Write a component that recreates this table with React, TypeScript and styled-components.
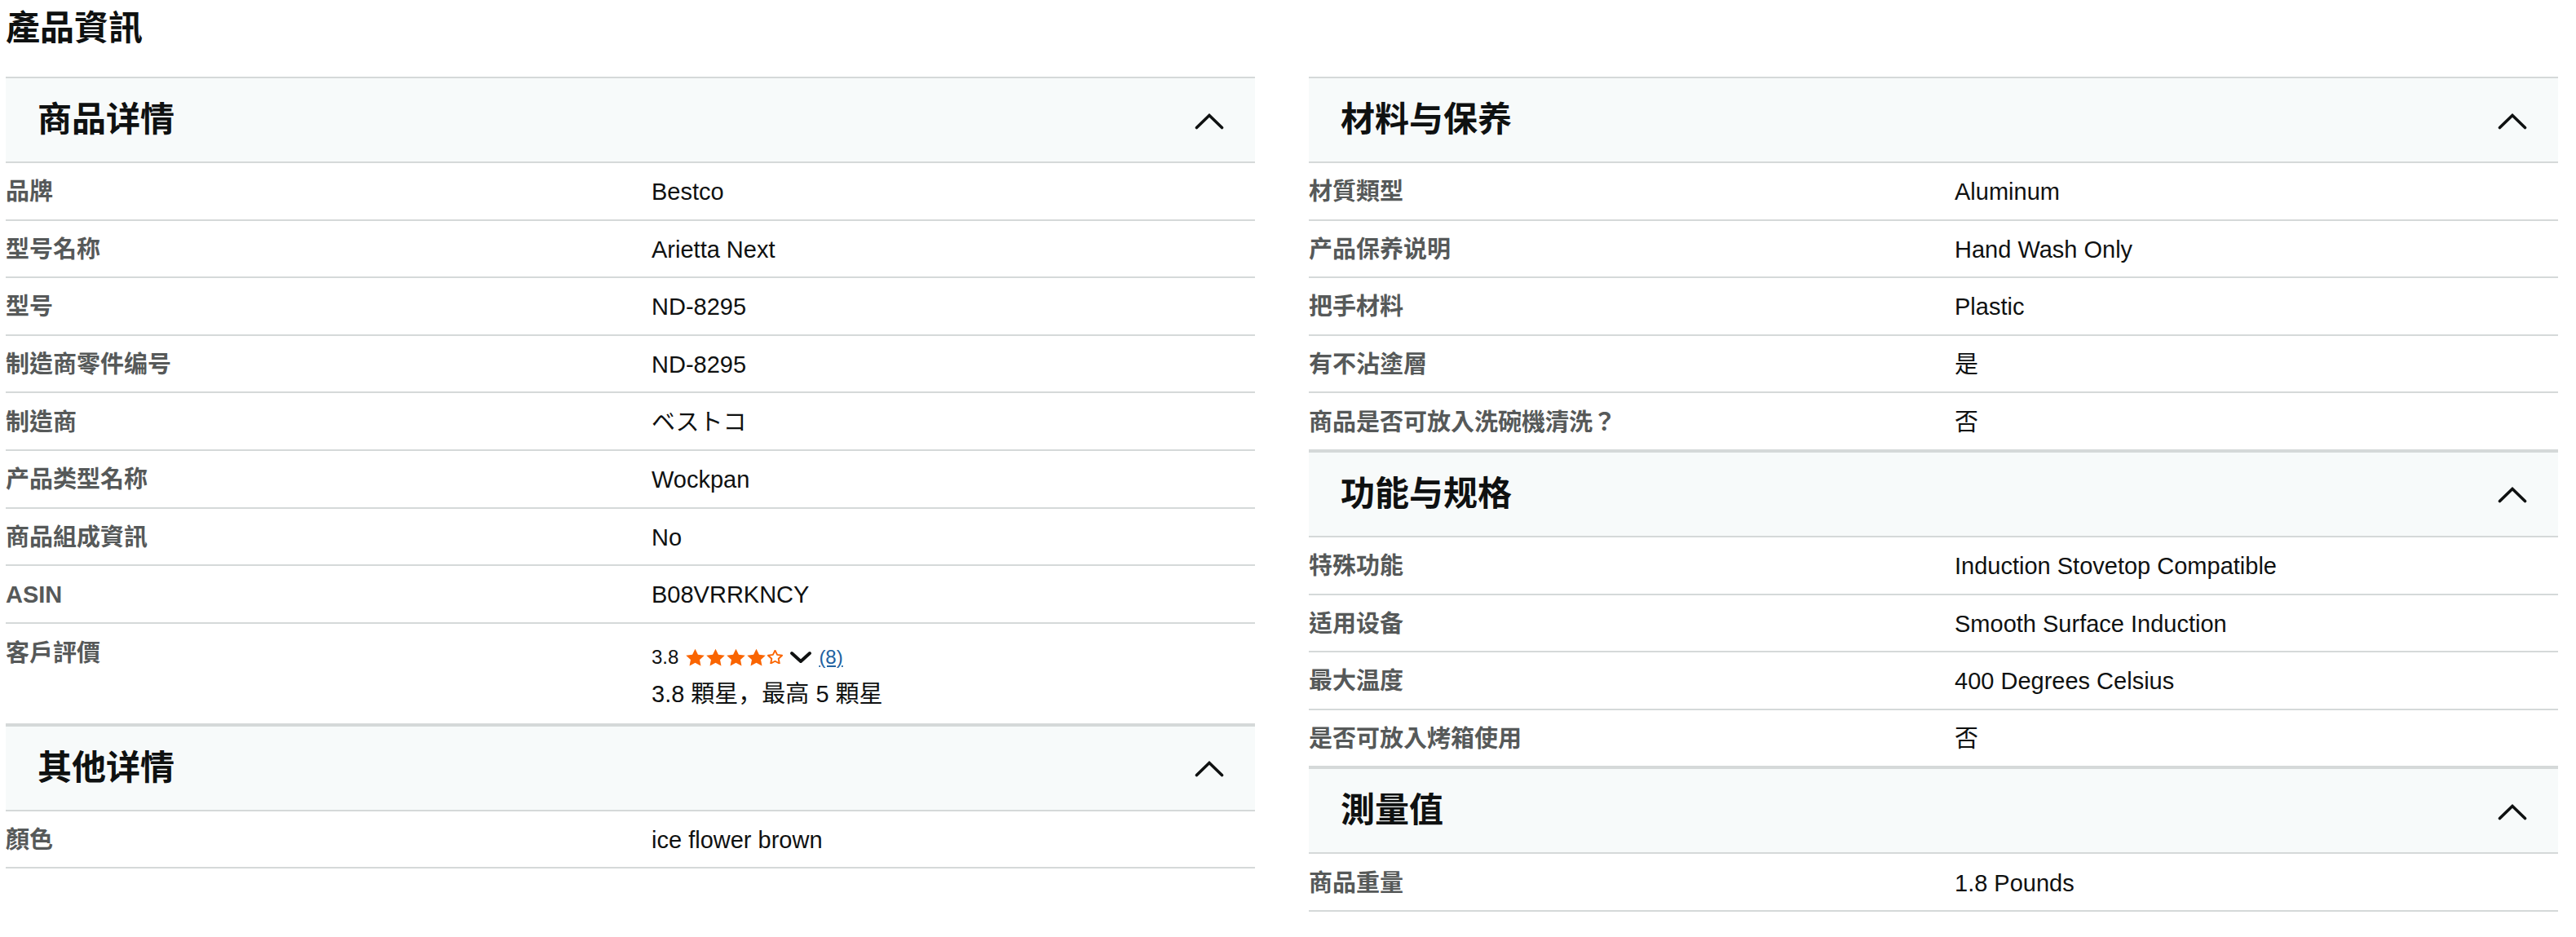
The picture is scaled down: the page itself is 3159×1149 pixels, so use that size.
import React from "react";
import styled, { createGlobalStyle } from "styled-components";

const GlobalStyle = createGlobalStyle`
  html, body { margin: 0; padding: 0; background: #ffffff; }
  body {
    font-family: "Liberation Sans", Arial, "Noto Sans CJK SC", sans-serif;
    color: #0f1111;
  }
  * { box-sizing: border-box; }
`;

const Page = styled.div`
  width: 3159px;
  padding: 0 22px 0 7px;
`;

const Title = styled.h2`
  margin: 0;
  height: 94px;
  padding-top: 6px;
  font-family: "Noto Sans CJK TC", "Noto Sans CJK SC", sans-serif;
  font-size: 42px;
  line-height: 50px;
  font-weight: 700;
  color: #0f1111;
`;

const Columns = styled.div`
  display: grid;
  grid-template-columns: 1fr 1fr;
  column-gap: 66px;
  align-items: start;
`;

const Column = styled.div`
  display: flex;
  flex-direction: column;
`;

const Section = styled.section`
  display: flex;
  flex-direction: column;
`;

const Header = styled.div`
  display: flex;
  align-items: center;
  justify-content: space-between;
  height: 106px;
  padding: 0 38px 0 39px;
  background: #f7fafa;
  border-top: 2px solid #d5d9d9;
  border-bottom: 2px solid #d5d9d9;
`;

const HeaderTitle = styled.h3`
  margin: 0 0 8px 0;
  font-family: "Noto Sans CJK SC", sans-serif;
  font-size: 42px;
  line-height: 50px;
  font-weight: 700;
  color: #0f1111;
`;

const Chevron = styled.svg`
  display: block;
  width: 36px;
  height: 21px;
  margin-top: 2px;
`;

const Row = styled.div<{ $tall?: boolean }>`
  display: grid;
  grid-template-columns: 792px 1fr;
  align-items: ${(p) => (p.$tall ? "start" : "center")};
  height: ${(p) => (p.$tall ? "124px" : "70.6px")};
  padding-top: ${(p) => (p.$tall ? "17px" : "2px")};
  border-bottom: 2px solid #d5d9d9;
`;

const Label = styled.div`
  font-family: "Liberation Sans", Arial, "Noto Sans CJK TC", sans-serif;
  font-size: 29px;
  line-height: 38px;
  font-weight: 700;
  color: #565959;
  white-space: nowrap;
`;

const Value = styled.div`
  font-family: "Liberation Sans", Arial, "Noto Sans CJK SC", sans-serif;
  font-size: 29px;
  line-height: 38px;
  color: #0f1111;
  white-space: nowrap;
`;

const RatingBlock = styled.div`
  display: flex;
  flex-direction: column;
`;

const RatingLine = styled.div`
  display: flex;
  align-items: center;
  height: 44px;
  margin-top: 2px;
  font-size: 24px;
  color: #0f1111;
`;

const RatingSummary = styled.div`
  margin-top: 2px;
  font-size: 29px;
  line-height: 42px;
  color: #0f1111;
  white-space: nowrap;
`;

const Stars = styled.span`
  display: inline-flex;
  align-items: center;
  gap: 0;
  margin-left: 8px;
`;

const StarIcon = styled.svg<{ $small?: boolean }>`
  display: block;
  width: ${(p) => (p.$small ? "19px" : "25px")};
  height: ${(p) => (p.$small ? "17px" : "22px")};
  margin-left: ${(p) => (p.$small ? "1px" : "0")};
`;

const DownIcon = styled.svg`
  display: block;
  width: 28px;
  height: 16px;
  margin-left: 8px;
`;

const CountLink = styled.a`
  margin-left: 8px;
  color: #2162a1;
  text-decoration: underline;
  font-size: 24px;
`;

const STAR_PATH =
  "M12 0.8l3.3 6.9 7.5 1-5.5 5.2 1.4 7.5L12 17.8l-6.7 3.6 1.4-7.5L1.2 8.7l7.5-1z";

const StarFull = () => (
  <StarIcon viewBox="0 0 24 22" preserveAspectRatio="none">
    <path d={STAR_PATH} fill="#fa6400" />
  </StarIcon>
);

const StarEmpty = () => (
  <StarIcon $small viewBox="0 0 24 22" preserveAspectRatio="none">
    <path d={STAR_PATH} fill="none" stroke="#fa6400" strokeWidth="2.4" strokeLinejoin="round" />
  </StarIcon>
);

const UpChevron = () => (
  <Chevron viewBox="0 0 36 21">
    <path d="M2.5 18.5 L18 3.5 L33.5 18.5" fill="none" stroke="#0f1111" strokeWidth="3.6" strokeLinecap="round" />
  </Chevron>
);

type Item = { label: string; value: string; rating?: boolean };
type SectionData = { title: string; items: Item[] };

const leftSections: SectionData[] = [
  {
    title: "商品详情",
    items: [
      { label: "品牌", value: "Bestco" },
      { label: "型号名称", value: "Arietta Next" },
      { label: "型号", value: "ND-8295" },
      { label: "制造商零件编号", value: "ND-8295" },
      { label: "制造商", value: "ベストコ" },
      { label: "产品类型名称", value: "Wockpan" },
      { label: "商品組成資訊", value: "No" },
      { label: "ASIN", value: "B08VRRKNCY" },
      { label: "客戶評價", value: "", rating: true },
    ],
  },
  {
    title: "其他详情",
    items: [{ label: "顏色", value: "ice flower brown" }],
  },
];

const rightSections: SectionData[] = [
  {
    title: "材料与保养",
    items: [
      { label: "材質類型", value: "Aluminum" },
      { label: "产品保养说明", value: "Hand Wash Only" },
      { label: "把手材料", value: "Plastic" },
      { label: "有不沾塗層", value: "是" },
      { label: "商品是否可放入洗碗機清洗？", value: "否" },
    ],
  },
  {
    title: "功能与规格",
    items: [
      { label: "特殊功能", value: "Induction Stovetop Compatible" },
      { label: "适用设备", value: "Smooth Surface Induction" },
      { label: "最大温度", value: "400 Degrees Celsius" },
      { label: "是否可放入烤箱使用", value: "否" },
    ],
  },
  {
    title: "測量值",
    items: [{ label: "商品重量", value: "1.8 Pounds" }],
  },
];

const Rating = () => (
  <RatingBlock>
    <RatingLine>
      <span>3.8</span>
      <Stars>
        <StarFull />
        <StarFull />
        <StarFull />
        <StarFull />
        <StarEmpty />
      </Stars>
      <DownIcon viewBox="0 0 28 16">
        <path d="M3 3 L14 13 L25 3" fill="none" stroke="#0f1111" strokeWidth="4" strokeLinecap="round" strokeLinejoin="round" />
      </DownIcon>
      <CountLink href="#">(8)</CountLink>
    </RatingLine>
    <RatingSummary>3.8 顆星，最高 5 顆星</RatingSummary>
  </RatingBlock>
);

const DetailSection = ({ data }: { data: SectionData }) => (
  <Section>
    <Header>
      <HeaderTitle>{data.title}</HeaderTitle>
      <UpChevron />
    </Header>
    {data.items.map((it) => (
      <Row key={it.label} $tall={it.rating}>
        <Label>{it.label}</Label>
        {it.rating ? <Rating /> : <Value>{it.value}</Value>}
      </Row>
    ))}
  </Section>
);

export default function App() {
  return (
    <>
      <GlobalStyle />
      <Page>
        <Title>產品資訊</Title>
        <Columns>
          <Column>
            {leftSections.map((s) => (
              <DetailSection key={s.title} data={s} />
            ))}
          </Column>
          <Column>
            {rightSections.map((s) => (
              <DetailSection key={s.title} data={s} />
            ))}
          </Column>
        </Columns>
      </Page>
    </>
  );
}
